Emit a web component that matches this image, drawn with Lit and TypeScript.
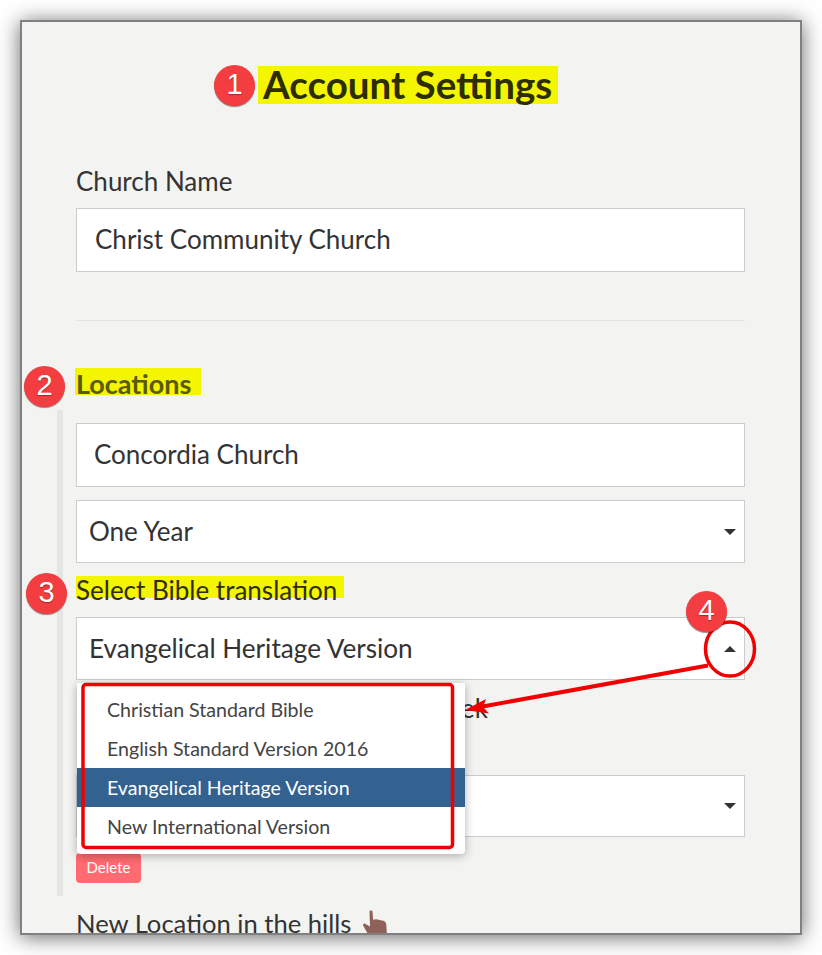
import { LitElement, html, css } from 'lit';
import { customElement } from 'lit/decorators.js';

const BIBLES = [
  'Christian Standard Bible',
  'English Standard Version 2016',
  'Evangelical Heritage Version',
  'New International Version',
];

@customElement('app-root')
export class AppRoot extends LitElement {
  static styles = css`
    :host {
      display: block;
      padding: 20px;
      height: 955px;
      box-sizing: border-box;
      background: #fff;
      font-family: Lato, sans-serif;
      color: #333;
    }

    .frame {
      position: relative;
      box-sizing: border-box;
      height: 915px;
      border: 2px solid #808080;
      background: #f3f3f1;
      box-shadow: 0 2px 20px rgba(0, 0, 0, 0.6);
      padding: 44px 55px 0 54px;
      overflow: hidden;
    }

    .title {
      display: block;
      width: 300px;
      height: 38px;
      box-sizing: border-box;
      margin: 0 0 0 182px;
      padding: 0 0 0 5px;
      background: #f4f500;
      color: #2d2d00;
      font-size: 38.5px;
      font-weight: 700;
      line-height: 36px;
      white-space: nowrap;
    }

    .label {
      font-size: 26px;
      line-height: 32px;
    }

    .church-label {
      margin-top: 61px;
    }

    .field {
      position: relative;
      box-sizing: border-box;
      height: 64px;
      display: flex;
      align-items: center;
      border: 1px solid #ccc;
      background: #fff;
      font-size: 26px;
      padding: 0 0 2px 18px;
      color: #333;
    }

    .location-name {
      padding-left: 17px;
    }

    .select {
      height: 63px;
      padding-left: 12px;
    }

    .caret {
      position: absolute;
      right: 8px;
      top: 50%;
      margin-top: -3px;
      width: 0;
      height: 0;
      border-left: 6px solid transparent;
      border-right: 6px solid transparent;
      border-top: 6px solid #333;
    }

    .caret.up {
      border-top: none;
      border-bottom: 6px solid #333;
    }

    .church-field {
      margin-top: 11px;
    }

    hr {
      border: none;
      height: 1px;
      background: #e4e4e0;
      margin: 48px 0 0;
    }

    /* highlighter strokes are shorter than the line box, text sits low in them */
    .locations {
      display: block;
      width: 126px;
      box-sizing: border-box;
      margin: 47px 0 0 -1px;
      padding-left: 1px;
      background: linear-gradient(#f4f500, #f4f500) no-repeat top / 100% 27px;
      color: #5a5a00;
      font-size: 27px;
      font-weight: 700;
      line-height: 31px;
    }

    .section {
      margin: 11px 0 0 -19px;
      padding: 13px 0 13px 13px;
      border-left: 6px solid #e5e5e4;
    }

    .section .field + .field {
      margin-top: 13px;
    }

    .bible-label {
      display: block;
      width: fit-content;
      margin-top: 13px;
      padding-right: 7px;
      background: linear-gradient(#f4f500, #f4f500) no-repeat top / 100% 22px;
      color: #2e2e0a;
      font-size: 26px;
      line-height: 28px;
    }

    .section .bible-select {
      margin-top: 13px;
      font-size: 26.15px;
    }

    .week-label {
      margin-top: 12px;
      white-space: nowrap;
    }

    .section .week-select {
      margin-top: 51px;
      height: 62px;
    }

    .delete {
      display: block;
      box-sizing: border-box;
      width: 65px;
      height: 30px;
      margin-top: 16px;
      border: none;
      border-radius: 4px;
      background: #ff6b70;
      color: #fff;
      font-family: Lato, sans-serif;
      font-size: 15px;
      line-height: 28px;
      padding: 0 0 2px;
    }

    .new-location {
      display: flex;
      align-items: flex-start;
      gap: 12px;
      margin-top: 11px;
      font-size: 25.6px;
    }

    .hand {
      flex: none;
      width: 25px;
      height: 30px;
      margin-top: 3px;
    }

    .dropdown {
      position: absolute;
      left: 55px;
      top: 661px;
      width: 388px;
      box-sizing: border-box;
      padding: 7px 0 8px;
      background: #fff;
      border-radius: 0 0 4px 4px;
      box-shadow: 0 2px 10px rgba(0, 0, 0, 0.3);
    }

    .option {
      height: 39px;
      line-height: 39px;
      padding-left: 30px;
      font-size: 19.6px;
      color: #444;
    }

    .option.selected {
      background: #336190;
      color: #fff;
    }

    .marks {
      position: absolute;
      left: 0;
      top: 0;
      width: 778px;
      height: 911px;
      pointer-events: none;
    }

    .badge {
      position: absolute;
      width: 41px;
      height: 41px;
      border-radius: 50%;
      background: #f33d40;
      box-shadow: 0 1px 1px rgba(0, 0, 0, 0.45);
      color: #fff;
      font-family: 'Liberation Sans', Arial, sans-serif;
      font-size: 29px;
      line-height: 39px;
      text-align: center;
      text-shadow: 0 1px 1px rgba(0, 0, 0, 0.35);
    }

    .b1 { left: 192px; top: 43px; }
    .b2 { left: 2px; top: 344px; }
    .b3 { left: 4px; top: 551px; }
    .b4 { left: 664px; top: 569px; }
  `;

  render() {
    return html`
      <div class="frame">
        <h1 class="title">Account Settings</h1>

        <div class="label church-label">Church Name</div>
        <div class="field church-field">Christ Community Church</div>

        <hr />

        <div class="locations">Locations</div>

        <div class="section">
          <div class="field location-name">Concordia Church</div>
          <div class="field select">One Year<span class="caret"></span></div>

          <div class="bible-label">Select Bible translation</div>
          <div class="field select bible-select">
            Evangelical Heritage Version<span class="caret up"></span>
          </div>

          <div class="label week-label">Select a first day of the church week</div>
          <div class="field select week-select"><span class="caret"></span></div>

          <button class="delete">Delete</button>
        </div>

        <div class="label new-location">
          New Location in the hills
          <svg class="hand" viewBox="0 0 25 30">
            <path
              fill="#8e6259"
              d="M6.500 1.500c0-1.400 2.800-1.400 3 0l.6 8.200 3.200-.5 3.400.7 3.600.8c1.600.4 2.700 1.700 2.900 3.300l.6 8.500c.1 2.800-.6 6-1.600 7.500H9.500c-.8-2-2.800-4.200-4.500-5.800L.4 15.900c-.9-1.200.3-2.700 1.700-2.200l4.900 2.800z"
            />
          </svg>
        </div>

        <div class="dropdown">
          ${BIBLES.map(
            (b, i) => html`<div class="option ${i === 2 ? 'selected' : ''}">${b}</div>`
          )}
        </div>

        <!-- red markup, drawn in page coordinates -->
        <svg class="marks" viewBox="22 22 778 911">
          <rect x="83" y="684.500" width="369.500" height="163" rx="3" fill="none" stroke="#f00000" stroke-width="3.500" />
          <ellipse cx="730" cy="649" rx="24.500" ry="27" fill="none" stroke="#f00000" stroke-width="3.500" />
          <line x1="708" y1="665.500" x2="480" y2="707" stroke="#f00000" stroke-width="4" />
          <polygon points="465,710 489,713.500 483,707 486,699" fill="#f00000" />
        </svg>

        <div class="badge b1">1</div>
        <div class="badge b2">2</div>
        <div class="badge b3">3</div>
        <div class="badge b4">4</div>
      </div>
    `;
  }
}
